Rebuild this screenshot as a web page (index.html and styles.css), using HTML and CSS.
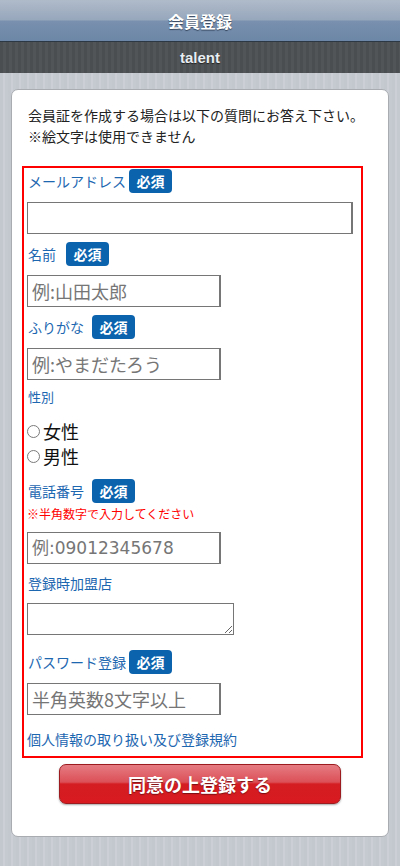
FILE: index.html
```html
<!DOCTYPE html>
<html lang="ja">
<head>
<meta charset="utf-8">
<title>会員登録</title>
<link rel="stylesheet" href="styles.css">
</head>
<body>
<header class="topbar"><h1>会員登録</h1></header>
<div class="subbar">talent</div>
<main class="card">
  <p class="intro">会員証を作成する場合は以下の質問にお答え下さい。<br>※絵文字は使用できません</p>
  <form class="formbox">
    <div class="row r-mail"><span class="lbl">メールアドレス</span><span class="badge">必須</span></div>
    <input class="field wide" type="text">
    <div class="row r-gap"><span class="lbl">名前</span><span class="badge b-wide">必須</span></div>
    <input class="field" type="text" placeholder="例:山田太郎">
    <div class="row r-gap"><span class="lbl">ふりがな</span><span class="badge b-mid">必須</span></div>
    <input class="field" type="text" placeholder="例:やまだたろう">
    <div class="plain sex">性別</div>
    <label class="radio r-first"><input type="radio" name="sex"><span>女性</span></label>
    <label class="radio"><input type="radio" name="sex"><span>男性</span></label>
    <div class="row r-tel"><span class="lbl">電話番号</span><span class="badge b-mid">必須</span></div>
    <div class="note">※半角数字で入力してください</div>
    <input class="field digits" type="text" placeholder="例:09012345678">
    <div class="plain shop">登録時加盟店</div>
    <textarea class="area"></textarea>
    <div class="row r-pass"><span class="lbl">パスワード登録</span><span class="badge">必須</span></div>
    <input class="field" type="password" placeholder="半角英数8文字以上">
    <a class="terms" href="#">個人情報の取り扱い及び登録規約</a>
  </form>
  <button class="submit" type="button">同意の上登録する</button>
</main>
</body>
</html>
```

FILE: styles.css
```css
* { box-sizing: border-box; }
html, body { margin: 0; padding: 0; }
body {
  width: 400px;
  min-height: 866px;
  font-family: "Noto Sans CJK JP", "Noto Sans", sans-serif;
  background-color: #c6cbd2;
  background-image: repeating-linear-gradient(90deg, #c3c8cf 0 3px, #ccd0d6 3px 5px, #c5cad1 5px 8px);
  color: #222;
}
.topbar {
  height: 42px;
  padding-top: 1px;
  background: linear-gradient(#b0bbca 0%, #97a7bc 48%, #7990ae 52%, #6c86a7 100%);
  border-bottom: 1px solid #2d3845;
  display: flex;
  align-items: center;
  justify-content: center;
}
.topbar h1 {
  margin: 0;
  font-size: 16px;
  line-height: 20px;
  font-weight: bold;
  color: #fff;
  text-shadow: 0 1px 1px #33435a;
}
.subbar {
  height: 31px;
  background-color: #4e5154;
  background-image: repeating-linear-gradient(90deg, #4b4e51 0 3px, #525558 3px 6px);
  color: #e8eef2;
  font-family: "Liberation Sans", Arial, sans-serif;
  font-weight: bold;
  font-size: 15px;
  line-height: 31px;
  text-align: center;
  text-shadow: 0 1px 1px #222;
}
.card {
  margin: 16px 11px 0;
  background: #fff;
  border: 1px solid #a9adb2;
  border-radius: 7px;
  padding: 15px 0 30px;
  min-height: 748px;
}
.intro {
  margin: 0 0 0 16px;
  font-size: 14px;
  line-height: 21px;
  color: #222;
}
.formbox {
  margin: 19px 0 0 10px;
  width: 341px;
  border: 2px solid #ff0000;
  padding: 0 3px 7px 3px;
  display: flex;
  flex-direction: column;
  align-items: flex-start;
}
.row {
  height: 24px;
  display: flex;
  align-items: center;
  margin-top: 8px;
}
.r-mail { margin-top: 1px; }
.r-tel { margin-top: 10px; }
.r-pass { margin-top: 15px; }
.lbl {
  font-size: 14px;
  line-height: 20px;
  color: #1d67b1;
  padding-left: 1px;
}
.badge {
  display: inline-block;
  height: 24px;
  width: 43px;
  margin-left: 3px;
  border-radius: 4px;
  background: #0b62ad;
  color: #fff;
  font-size: 14px;
  font-weight: bold;
  line-height: 24px;
  text-align: center;
}
.b-wide { margin-left: 10px; }
.b-mid { margin-left: 8px; }
.field {
  display: block;
  margin: 9px 0 0 0;
  width: 194px;
  height: 32px;
  border: 1px solid #767676;
  border-right-width: 2px;
  border-radius: 0;
  padding: 0 4px;
  font-family: "Noto Sans CJK JP", sans-serif;
  font-size: 18px;
  color: #222;
  background: #fff;
  outline: none;
}
.field.wide { width: 326px; }
.field.digits { font-family: "DejaVu Sans", "Noto Sans CJK JP", sans-serif; font-size: 17px; }
.field::placeholder { color: #767676; }
.plain {
  font-size: 13px;
  line-height: 20px;
  color: #1d67b1;
  padding-left: 1px;
}
.sex { margin-top: 7px; }
.shop { margin-top: 9px; font-size: 14px; }
.radio {
  display: flex;
  align-items: center;
  height: 25px;
  font-size: 18px;
  line-height: 25px;
  color: #111;
}
.r-first { margin-top: 12px; }
.radio input {
  appearance: none;
  -webkit-appearance: none;
  width: 13px;
  height: 13px;
  margin: 0 3px 0 0;
  border: 1px solid #7a7a7a;
  border-radius: 50%;
  background: #fff;
}
.note {
  margin-top: 2px;
  font-size: 12px;
  line-height: 18px;
  color: #ff0000;
}
.area {
  display: block;
  margin-top: 10px;
  width: 207px;
  height: 32px;
  border: 1px solid #767676;
  border-radius: 0;
  resize: both;
  background: #fff;
}
.terms {
  margin-top: 14px;
  font-size: 14px;
  line-height: 20px;
  color: #1d67b1;
  text-decoration: none;
}
.submit {
  display: block;
  margin: 6px auto 0;
  width: 282px;
  height: 40px;
  border: 1px solid #9b1b1f;
  border-radius: 7px;
  background: linear-gradient(#e57b82 0%, #dc5058 45%, #d41d22 50%, #d81a1f 100%);
  box-shadow: 0 1px 2px rgba(0,0,0,0.35);
  color: #fff;
  font-family: "Noto Sans CJK JP", sans-serif;
  font-size: 18px;
  font-weight: bold;
  line-height: 38px;
  padding: 0;
  text-shadow: 0 1px 1px #7a1014;
}
```
